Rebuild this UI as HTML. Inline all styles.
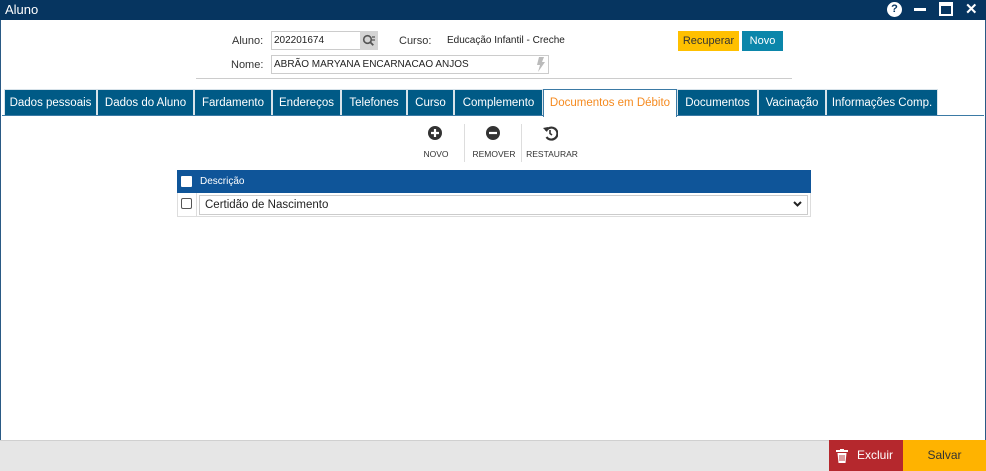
<!DOCTYPE html>
<html><head><meta charset="utf-8"><style>
*{box-sizing:border-box;margin:0;padding:0}
body{width:986px;height:471px;overflow:hidden;background:#fff;font-family:"Liberation Sans",sans-serif;font-size:11px;color:#222;position:relative}
.abs{position:absolute}
.title{left:0;top:0;width:986px;height:20px;background:#063560;color:#fff;font-size:13px;padding:2px 5px}
.frame{left:0;top:20px;width:986px;height:420px;border-left:1px solid #2a5a85;border-right:1px solid #2a5a85}
.lbl{font-size:11px;color:#333}
.inp{border:1px solid #ccc;height:19px;font-size:10px;padding:3px 2px;background:#fff}
.tab{top:89px;height:26px;background:#005a86;color:#fff;font-size:11.5px;text-align:center;line-height:26px;border:1px solid #d8e3ea;border-bottom:none}
.tab.act{background:#fff;color:#f58a1f;border:1px solid #3b7aa5;border-bottom:none;height:28px}
.tb{font-size:8.5px;color:#333;text-align:center}
</style></head><body>
<div class="abs title">Aluno</div>
<div class="abs" style="left:887px;top:2px;width:15px;height:15px;border-radius:50%;background:#fff;color:#063560;font-weight:bold;font-size:11px;text-align:center;line-height:15px">?</div>
<div class="abs" style="left:914px;top:8px;width:12px;height:3px;background:#fff"></div>
<div class="abs" style="left:939px;top:2px;width:14px;height:14px;border:2px solid #fff;border-top-width:4px"></div>
<div class="abs" style="left:965px;top:0px;color:#fff;font-size:15px;font-weight:bold">✕</div>
<div class="abs frame"></div>

<div class="abs lbl" style="left:232px;top:35px">Aluno:</div>
<div class="abs inp" style="left:271px;top:31px;width:90px">202201674</div>
<div class="abs" style="left:360px;top:31px;width:18px;height:19px;background:#d4d4d4"></div>
<svg class="abs" style="left:362px;top:34px" width="14" height="13"><circle cx="5.5" cy="5.5" r="3.8" fill="none" stroke="#555" stroke-width="1.6"/><path d="M8.3 8.3l3 3" stroke="#555" stroke-width="1.8"/><path d="M10 3h3M10 6h3" stroke="#555" stroke-width="1.2"/></svg>
<div class="abs lbl" style="left:399px;top:35px">Curso:</div>
<div class="abs" style="left:447px;top:35px;font-size:10px">Educação Infantil - Creche</div>
<div class="abs" style="left:678px;top:31px;width:61px;height:20px;background:#ffc000;color:#333;font-size:11px;text-align:center;line-height:20px">Recuperar</div>
<div class="abs" style="left:742px;top:31px;width:41px;height:20px;background:#0b86aa;color:#fff;font-size:11px;text-align:center;line-height:20px">Novo</div>
<div class="abs lbl" style="left:231px;top:59px">Nome:</div>
<div class="abs inp" style="left:271px;top:55px;width:278px">ABRÃO MARYANA ENCARNACAO ANJOS</div>
<svg class="abs" style="left:536px;top:57px" width="9" height="15"><path d="M3 0h5L6 5h3L2 15l2-7H1z" fill="#bbb"/></svg>
<div class="abs" style="left:196px;top:78px;width:596px;height:1px;background:#ccc"></div>

<div class="abs" style="left:2px;top:115px;width:982px;height:1px;background:#3b7aa5"></div>
<div class="abs tab" style="left:4px;width:93px">Dados pessoais</div>
<div class="abs tab" style="left:97px;width:97px">Dados do Aluno</div>
<div class="abs tab" style="left:194px;width:78px">Fardamento</div>
<div class="abs tab" style="left:272px;width:69px">Endereços</div>
<div class="abs tab" style="left:341px;width:66px">Telefones</div>
<div class="abs tab" style="left:407px;width:47px">Curso</div>
<div class="abs tab" style="left:454px;width:89px">Complemento</div>
<div class="abs tab act" style="left:543px;width:134px">Documentos em Débito</div>
<div class="abs tab" style="left:677px;width:81px">Documentos</div>
<div class="abs tab" style="left:758px;width:68px">Vacinação</div>
<div class="abs tab" style="left:826px;width:112px">Informações Comp.</div>

<svg class="abs" style="left:427px;top:125px" width="16" height="16"><circle cx="8" cy="8" r="7" fill="#333"/><path d="M8 4v8M4 8h8" stroke="#fff" stroke-width="2.2"/></svg>
<div class="abs tb" style="left:420px;top:149px;width:32px">NOVO</div>
<div class="abs" style="left:464px;top:124px;width:1px;height:38px;background:#ddd"></div>
<svg class="abs" style="left:485px;top:125px" width="16" height="16"><circle cx="8" cy="8" r="7" fill="#333"/><path d="M4 8h8" stroke="#fff" stroke-width="2.2"/></svg>
<div class="abs tb" style="left:472px;top:149px;width:44px">REMOVER</div>
<div class="abs" style="left:521px;top:124px;width:1px;height:38px;background:#ddd"></div>
<svg class="abs" style="left:542px;top:125px" width="16" height="16"><path d="M4 6A6 6 0 1 1 4.5 12" fill="none" stroke="#333" stroke-width="2.2"/><path d="M1 3l4 4 1-5z" fill="#333"/><path d="M8 5v3.5l2 1.5" fill="none" stroke="#333" stroke-width="1.6"/></svg>
<div class="abs tb" style="left:526px;top:149px;width:52px">RESTAURAR</div>

<div class="abs" style="left:177px;top:170px;width:634px;height:23px;background:#0f5599"></div>
<div class="abs" style="left:181px;top:176px;width:11px;height:11px;background:#fff;border-radius:1px"></div>
<div class="abs" style="left:200px;top:176px;color:#fff;font-size:10px">Descrição</div>
<div class="abs" style="left:177px;top:193px;width:634px;height:24px;border:1px solid #ddd;border-top:none"></div>
<div class="abs" style="left:181px;top:198px;width:11px;height:11px;border:1px solid #555;border-radius:2px;background:#fff"></div>
<div class="abs" style="left:196px;top:193px;width:1px;height:24px;background:#ddd"></div>
<div class="abs" style="left:199px;top:195px;width:609px;height:20px;border:1px solid #ccc;font-size:11.5px;padding:3px 5px">Certidão de Nascimento</div>
<svg class="abs" style="left:793px;top:201px" width="9" height="7"><path d="M1 1l3.5 3.5L8 1" fill="none" stroke="#222" stroke-width="2"/></svg>

<div class="abs" style="left:0;top:440px;width:986px;height:31px;background:#e6e6e6;border-top:1px solid #d0d0d0"></div>
<div class="abs" style="left:829px;top:440px;width:74px;height:31px;background:#b5282d;color:#fff;font-size:12px;line-height:31px;padding-left:28px">Excluir</div>
<svg class="abs" style="left:836px;top:449px" width="12" height="14"><rect x="0" y="1" width="12" height="2" fill="#fff"/><rect x="4" y="0" width="4" height="2" fill="#fff"/><path d="M1.5 4h9l-1 10h-7z" fill="#fff"/><path d="M4 6v6M6 6v6M8 6v6" stroke="#b5282d" stroke-width="0.9"/></svg>
<div class="abs" style="left:903px;top:440px;width:83px;height:31px;background:#ffb300;color:#333;font-size:12px;line-height:31px;text-align:center">Salvar</div>
</body></html>
